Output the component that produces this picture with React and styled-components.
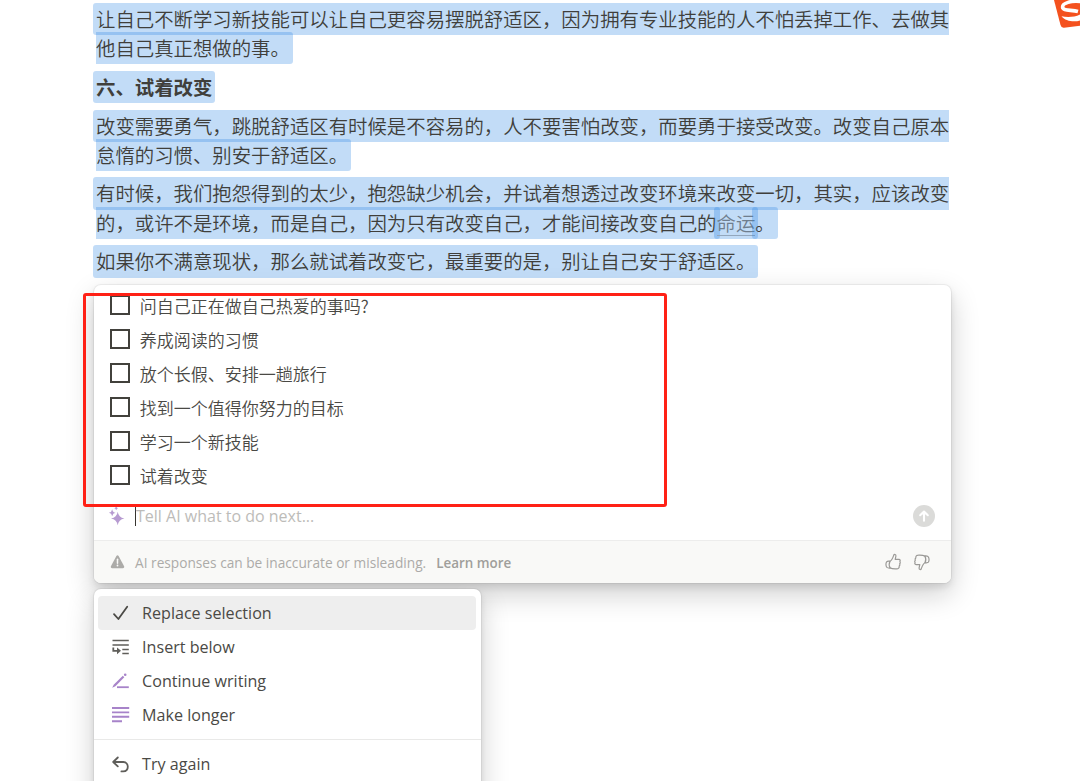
import React from 'react';
import styled, { createGlobalStyle } from 'styled-components';

const GlobalStyle = createGlobalStyle`
  * {
    box-sizing: border-box;
  }

  body {
    margin: 0;
    background: #fff;
    color: #4a4945;
    font-family: 'Open Sans', 'Noto Sans CJK SC', sans-serif;
  }
`;

const Page = styled.div`
  position: relative;
  height: 781px;
  padding-left: 94px;
  overflow: hidden;
`;

const Article = styled.article`
  display: flex;
  flex-direction: column;
  gap: 9.7px;
  padding: 4.6px 0 0 2px;
  height: 284.5px;
  color: #403f3b;
  font-family: 'Noto Sans CJK SC', sans-serif;
  font-size: 19.4px;
`;

const Paragraph = styled.div`
  font-weight: ${props => props.$bold ? 700 : 350};
`;

const Line = styled.div`
  display: flex;
  height: 29.1px;
  white-space: nowrap;
`;

const Selected = styled.span`
  flex: none;
  height: 32.4px;
  margin: -1.7px ${props => props.$end ? '-3px' : 0} 0 ${props => props.$start ? '-3px' : 0};
  padding: 0 ${props => props.$end ? '3px' : 0} 0 ${props => props.$start ? '3px' : 0};
  line-height: 32.6px;
  background: rgba(35, 131, 226, 0.28);
  border-radius: ${props => {
    const l = props.$start ? '3px' : '0';
    const r = props.$end ? '3px' : '0';
    return `${l} ${r} ${r} ${l}`;
  }};
`;

const PageLink = styled.span`
  display: inline-block;
  height: 29px;
  line-height: 32.6px;
  color: #6f7e8e;
  border-bottom: 1px solid #93a7bd;
`;

const AiPanel = styled.section`
  display: flex;
  flex-direction: column;
  width: 857px;
  height: 298.5px;
  border-radius: 7px;
  background: #fff;
  overflow: hidden;
  box-shadow: 0 0 0 1px rgba(15, 15, 15, 0.05), 0 4px 7px rgba(15, 15, 15, 0.1),
    0 11px 29px rgba(15, 15, 15, 0.2);
`;

const TodoList = styled.div`
  height: 207.5px;
  padding: 4.2px 0 0 16.4px;
`;

const TodoItem = styled.div`
  display: flex;
  align-items: center;
  gap: 9.3px;
  height: 34px;
  font-family: 'Noto Sans CJK SC', sans-serif;
  font-size: 17px;
  font-weight: 350;
  line-height: 24px;
`;

const Checkbox = styled.span`
  width: 20px;
  height: 20px;
  margin-top: -1px;
  border: 2px solid #42413c;
`;

const PromptRow = styled.div`
  display: flex;
  align-items: center;
  height: 47.5px;
  padding: 0 16px 0 14px;
`;

const Prompt = styled.div`
  flex: 1;
  height: 21px;
  margin: 0 0 0 9px;
  border-left: 1px solid #37352f;
  color: #bdbcb9;
  font-size: 16px;
  line-height: 23px;
`;

const SendButton = styled.button`
  display: flex;
  align-items: center;
  justify-content: center;
  width: 22px;
  height: 22px;
  padding: 0;
  border: 0;
  border-radius: 50%;
  background: #dbdbd9;
`;

const PanelFooter = styled.footer`
  display: flex;
  align-items: center;
  flex: 1;
  padding: 0 21px 0 16px;
  border-top: 1px solid #ededec;
  background: #f9f9f7;
  color: #acaba8;
  font-size: 13.7px;
`;

const Disclaimer = styled.span`
  margin: 2px 0 0 10px;
`;

const LearnMore = styled.a`
  flex: 1;
  margin: 2px 0 0 10px;
  color: #a09f9b;
  font-size: 13.4px;
  font-weight: 600;
`;

const Feedback = styled.div`
  display: flex;
  gap: 11.5px;
`;

const Menu = styled.nav`
  width: 387px;
  height: 260px;
  margin-top: 5.5px;
  border-radius: 7px;
  background: #fff;
  box-shadow: 0 0 0 1px rgba(15, 15, 15, 0.05), 0 4px 7px rgba(15, 15, 15, 0.1),
    0 11px 29px rgba(15, 15, 15, 0.2);
`;

const MenuGroup = styled.div`
  padding: 7px 5px 7.5px 4px;
  border-bottom: 1px solid #e9e9e8;
`;

const MenuItem = styled.div`
  display: flex;
  align-items: center;
  gap: 11.5px;
  height: 34px;
  padding-left: 11.6px;
  border-radius: 4px;
  background: ${props => props.$active ? '#eeeeee' : 'transparent'};
  font-size: 16.1px;
  line-height: 24px;
`;

const MarkedArea = styled.div`
  position: absolute;
  left: 83px;
  top: 293px;
  width: 584px;
  height: 214px;
  border: 3.5px solid #ff2116;
  border-radius: 3px;
`;

const FloatingLogo = styled.svg`
  position: absolute;
  top: 0;
  right: 0;
`;

const SparkleIcon = () => (
  <svg width="18" height="20" viewBox="0 0 18 20" fill="#b79bd1">
    <path d="M9.7 5.8Q10.5 11.5 16.4 12.5Q10.5 13.5 9.7 19.2Q8.9 13.5 3 12.5Q8.9 11.5 9.7 5.8Z" />
    <path d="M4.2 3.2Q4.7 6.3 7.5 6.8Q4.7 7.3 4.2 10.2Q3.7 7.3 0.9 6.8Q3.7 6.3 4.2 3.2Z" />
    <path d="M8.2 0.3Q8.5 2 10.1 2.3Q8.5 2.6 8.2 4.3Q7.9 2.6 6.3 2.3Q7.9 2 8.2 0.3Z" />
  </svg>
);

const WarningIcon = () => (
  <svg width="15" height="14" viewBox="0 0 15 14">
    <path d="M6.4 1.1Q7.5 -0.4 8.6 1.1L14.1 11.3Q14.6 13 13 13.2H2Q0.4 13 0.9 11.3Z" fill="#acaba8" />
    <path d="M7.5 4.3V8.2" stroke="#f9f9f7" strokeWidth="1.5" strokeLinecap="round" />
    <circle cx="7.5" cy="10.5" r="0.9" fill="#f9f9f7" />
  </svg>
);

const ThumbIcon = ({ down }) => (
  <svg
    width="17"
    height="18"
    viewBox="0 0 17 18"
    fill="none"
    stroke="#9b9a97"
    strokeWidth="1.2"
    strokeLinejoin="round"
    strokeLinecap="round"
    transform={down ? 'rotate(180)' : undefined}
  >
    <path d="M5 8.2C7 7.4 7.9 4.6 8.7 2.3C9.2 0.9 11.2 1.3 10.9 3.1L10.2 6.4H13.9C15.3 6.5 15.5 7.8 14.9 8.5C15.5 9.3 15.4 10.2 14.7 10.8C15.1 11.6 14.9 12.5 14.2 13C14.5 15 13.3 15.9 11.7 15.9C8.8 16.1 6.3 15.6 5 14.9" />
    <path d="M5 8.2C3.6 8.3 2.5 7.9 1.6 8.8C0.6 10.2 0.8 13.2 1.9 14.4C2.9 15.2 4 15.1 5.2 15C3.9 12.8 3.9 10.4 5 8.2Z" />
  </svg>
);

const CheckIcon = () => (
  <svg width="21" height="20" viewBox="0 0 21 20" fill="none" stroke="#4a4945" strokeWidth="1.8" strokeLinecap="round" strokeLinejoin="round">
    <path d="M4 11.2L8.4 16L17.2 3.7" />
  </svg>
);

const InsertIcon = () => (
  <svg width="21" height="20" viewBox="0 0 21 20" fill="none" stroke="#5f5e5a" strokeWidth="1.6">
    <path d="M2.5 3.5H18.8M2.5 8H18.8M12.3 12.5H18.8M12.3 16.5H18.8" />
    <path d="M3.3 10.5V13.8H9" strokeWidth="1.8" />
    <path d="M7 10.4L11 13.8L7 17.2Z" fill="#5f5e5a" stroke="none" />
  </svg>
);

const PenIcon = () => (
  <svg width="21" height="20" viewBox="0 0 21 20" fill="none" stroke="#a783c9" strokeWidth="1.8">
    <path d="M7 16.2H18.8" />
    <path d="M2.2 16.8L3.7 13.8L12.8 4.8L14.3 6.3L5.4 15.3Z" fill="#a783c9" stroke="none" />
    <circle cx="15.2" cy="3.7" r="1.3" fill="#a783c9" stroke="none" />
  </svg>
);

const LinesIcon = () => (
  <svg width="21" height="20" viewBox="0 0 21 20" fill="none" stroke="#a783c9" strokeWidth="1.9">
    <path d="M2 3H19.2M2 7.4H19.2M2 11.8H19.2M2 16.2H12" />
  </svg>
);

const UndoIcon = () => (
  <svg width="21" height="20" viewBox="0 0 21 20" fill="none" stroke="#5f5e5a" strokeWidth="1.8" strokeLinecap="round" strokeLinejoin="round">
    <path d="M7.8 3.5L3.2 8L7.8 12.4M3.5 8H13.4C19.2 8.2 19.4 17.2 13.2 17.4H11.4" />
  </svg>
);

const ArrowUpIcon = () => (
  <svg width="12" height="12" viewBox="0 0 12 12" fill="none" stroke="#fff" strokeWidth="2.1" strokeLinecap="round" strokeLinejoin="round">
    <path d="M6 10.7V1.6M2.2 5.2L6 1.5L9.8 5.2" />
  </svg>
);

const todos = [
  '问自己正在做自己热爱的事吗?',
  '养成阅读的习惯',
  '放个长假、安排一趟旅行',
  '找到一个值得你努力的目标',
  '学习一个新技能',
  '试着改变',
];

const actions = [
  { label: 'Replace selection', Icon: CheckIcon, active: true },
  { label: 'Insert below', Icon: InsertIcon },
  { label: 'Continue writing', Icon: PenIcon },
  { label: 'Make longer', Icon: LinesIcon },
];

const SelectedText = ({ lines, bold }) => (
  <Paragraph $bold={bold}>
    {lines.map((line, i) => (
      <Line key={line}>
        <Selected $start={i === 0} $end={i === lines.length - 1}>{line}</Selected>
      </Line>
    ))}
  </Paragraph>
);

const App = () => (
  <>
    <GlobalStyle />
    <Page>
      <Article>
        <SelectedText
          lines={[
            '让自己不断学习新技能可以让自己更容易摆脱舒适区，因为拥有专业技能的人不怕丢掉工作、去做其',
            '他自己真正想做的事。',
          ]}
        />
        <SelectedText bold lines={['六、试着改变']} />
        <SelectedText
          lines={[
            '改变需要勇气，跳脱舒适区有时候是不容易的，人不要害怕改变，而要勇于接受改变。改变自己原本',
            '怠惰的习惯、别安于舒适区。',
          ]}
        />
        <Paragraph>
          <Line>
            <Selected $start>有时候，我们抱怨得到的太少，抱怨缺少机会，并试着想透过改变环境来改变一切，其实，应该改变</Selected>
          </Line>
          <Line>
            <Selected $end>的，或许不是环境，而是自己，因为只有改变自己，才能间接改变自己的</Selected>
            <Selected $start $end><PageLink>命运</PageLink></Selected>
            <Selected $start $end>。</Selected>
          </Line>
        </Paragraph>
        <SelectedText lines={['如果你不满意现状，那么就试着改变它，最重要的是，别让自己安于舒适区。']} />
      </Article>

      <AiPanel>
        <TodoList>
          {todos.map(todo => (
            <TodoItem key={todo}>
              <Checkbox />
              {todo}
            </TodoItem>
          ))}
        </TodoList>
        <PromptRow>
          <SparkleIcon />
          <Prompt>Tell AI what to do next...</Prompt>
          <SendButton><ArrowUpIcon /></SendButton>
        </PromptRow>
        <PanelFooter>
          <WarningIcon />
          <Disclaimer>AI responses can be inaccurate or misleading.</Disclaimer>
          <LearnMore>Learn more</LearnMore>
          <Feedback>
            <ThumbIcon />
            <ThumbIcon down />
          </Feedback>
        </PanelFooter>
      </AiPanel>

      <Menu>
        <MenuGroup>
          {actions.map(({ label, Icon, active }) => (
            <MenuItem key={label} $active={active}>
              <Icon />
              {label}
            </MenuItem>
          ))}
        </MenuGroup>
        <MenuGroup>
          <MenuItem>
            <UndoIcon />
            Try again
          </MenuItem>
        </MenuGroup>
      </Menu>

      <MarkedArea />
      <FloatingLogo width="30" height="30" viewBox="0 0 30 30">
        <path d="M4 0L10.5 25Q11.3 28 14 27.7L30 25.8V0Z" fill="#f4511e" />
        <path d="M31 1.6C21 0.4 12.6 3 12.6 7C12.6 11.2 21 9.6 28 11.6" fill="none" stroke="#fff" strokeWidth="3.6" />
        <path d="M11.5 16.2C17 17.6 25 17.4 31 14V20C25 22.6 15.5 21.4 11.5 16.2Z" fill="#fff" />
      </FloatingLogo>
    </Page>
  </>
);

export default App;
